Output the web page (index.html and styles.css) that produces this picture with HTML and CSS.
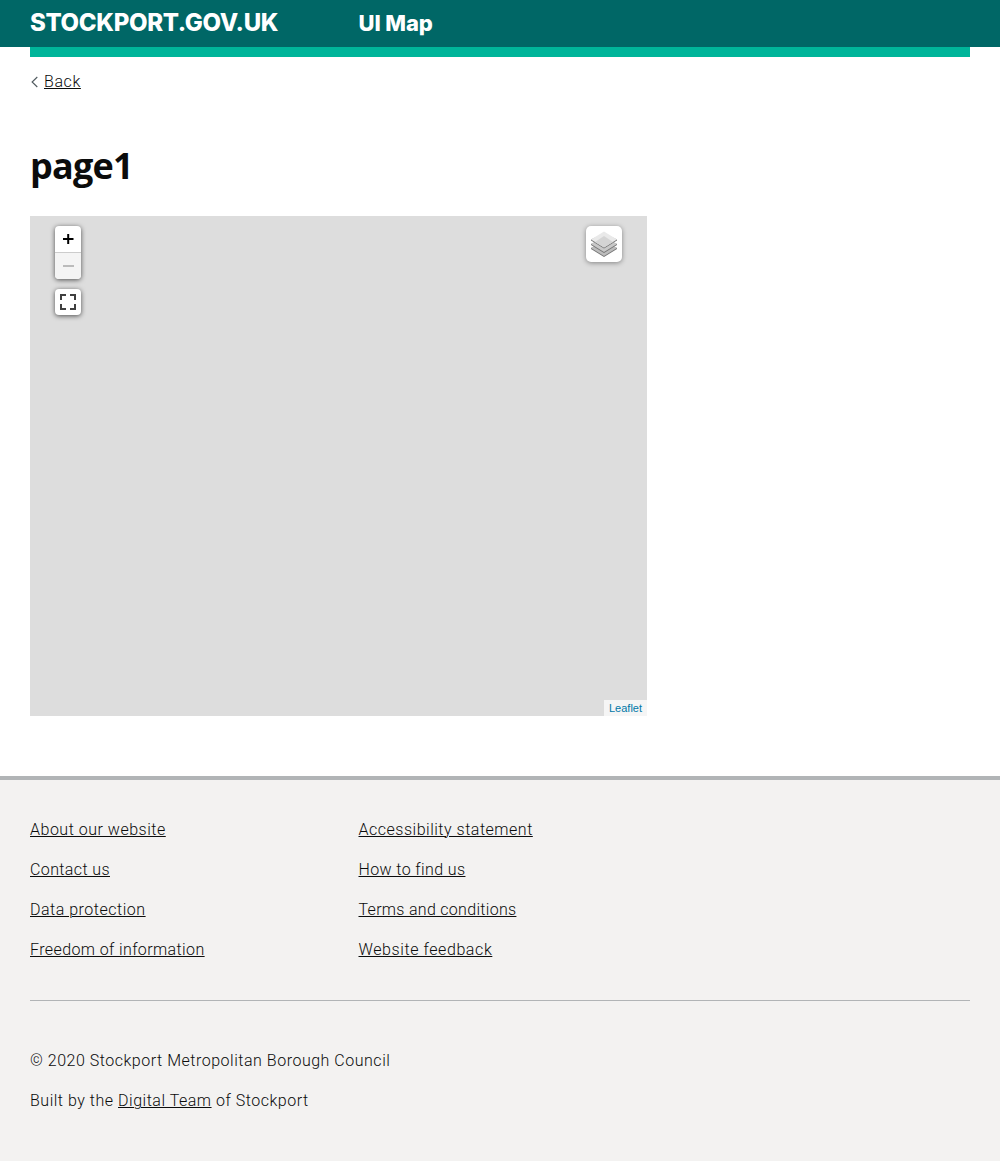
FILE: index.html
```html
<!DOCTYPE html>
<html lang="en">
<head>
<meta charset="utf-8">
<title>page1 - UI Map</title>
<link rel="stylesheet" href="styles.css">
</head>
<body>
<header class="header">
  <div class="header-row">
    <span class="brand">STOCKPORT.GOV.UK</span>
    <span class="service">UI Map</span>
  </div>
</header>
<div class="container">
  <div class="header-bar"></div>
  <div class="back">
    <svg class="chevron" width="8" height="12" viewBox="0 0 8 12"><path d="M7.3 1 2.1 6l5.2 5" fill="none" stroke="#505a5f" stroke-width="1.1"/></svg>
    <a class="link back-link" href="#">Back</a>
  </div>
  <main>
    <h1 class="title">page1</h1>
    <div class="map">
      <div class="controls">
        <div class="control zoom">
          <a class="button" href="#" aria-label="Zoom in"><svg width="26" height="26" viewBox="0 0 26 26"><path d="M8 13h10.500M13.200 8v10" fill="none" stroke="#000" stroke-width="2"/></svg></a>
          <a class="button disabled" href="#" aria-label="Zoom out"><svg width="26" height="26" viewBox="0 0 26 26"><path d="M8 13h11" fill="none" stroke="#bbb" stroke-width="2"/></svg></a>
        </div>
        <a class="control button" href="#" aria-label="Full screen"><svg width="26" height="26" viewBox="0 0 26 26"><path d="M6 11V6h5M15 6h5v5M20 15v5h-5M11 20H6v-5" fill="none" stroke="#404040" stroke-width="2"/></svg></a>
      </div>
      <a class="control layers" href="#" aria-label="Layers">
        <svg width="26" height="26" viewBox="0 0 26 26">
          <path d="M0 17v1l13 8 13-8v-1l-13-6z" fill="#747474"/><path d="M0 17l13-8 13 8-13 8z" fill="#bcbcbc"/>
          <path d="M0 13v1l13 8 13-8v-1l-13-6z" fill="#747474"/><path d="M0 13l13-8 13 8-13 8z" fill="#c8c8c8"/>
          <path d="M0 8.500v1l13 8 13-8v-1l-13-6z" fill="#747474"/><path d="M0 8.500l13-8 13 8-13 8z" fill="#e9e9e9"/><path d="M4 11l9-6 9 6-9 5.500z" fill="#d4d4d4"/>
        </svg>
      </a>
      <div class="attribution"><a href="#">Leaflet</a></div>
    </div>
  </main>
</div>
<footer class="footer">
  <div class="container">
    <div class="footer-nav">
      <ul class="list">
        <li class="loose"><a class="link" href="#">About our website</a></li>
        <li><a class="link" href="#">Contact us</a></li>
        <li class="loose"><a class="link" href="#">Data protection</a></li>
        <li><a class="link" href="#">Freedom of information</a></li>
      </ul>
      <ul class="list">
        <li class="loose"><a class="link" href="#">Accessibility statement</a></li>
        <li><a class="link" href="#">How to find us</a></li>
        <li class="tight"><a class="link" href="#">Terms and conditions</a></li>
        <li class="looser"><a class="link" href="#">Website feedback</a></li>
      </ul>
    </div>
    <div class="meta">
      <p>© 2020 Stockport Metropolitan Borough Council</p>
      <p>Built by the <a class="link" href="#">Digital Team</a> of Stockport</p>
    </div>
  </div>
</footer>
</body>
</html>
```
FILE: styles.css
```css
* { box-sizing: border-box; }
body {
  margin: 0;
  color: #0b0c0c;
  background: #fff;
  font: 300 16px/20px Roboto, "Liberation Sans", sans-serif;
  letter-spacing: 0.39px;
}
a { color: inherit; }
svg { display: block; }
.container { margin: 0 30px; }
.header { height: 47px; background: #006766; color: #fff; }
.header-row {
  display: grid;
  grid-template-columns: 328.5px 1fr;
  padding: 7px 30px 0;
  font: 800 24px/30px Inter, sans-serif;
}
.brand { padding-top: 1px; letter-spacing: -0.35px; }
.service { font-size: 22px; line-height: 32px; letter-spacing: -0.1px; }
.header-bar { height: 10px; background: #00b59a; }
.back { display: flex; align-items: center; gap: 6px; height: 20px; margin-top: 15px; letter-spacing: 0.6px; }
.link { text-decoration: underline; text-decoration-thickness: 1px; text-underline-offset: 1px; }
.title {
  margin: 49px 0 0;
  height: 75px;
  font: 700 36px/50px "Open Sans", sans-serif;
  letter-spacing: -0.8px;
}
.map {
  display: flex;
  justify-content: space-between;
  align-items: flex-start;
  position: relative;
  width: 617px;
  height: 500px;
  padding: 10px 25px;
  background: #ddd;
}
.controls { display: flex; flex-direction: column; gap: 10px; }
.control { background: #fff; border-radius: 4px; box-shadow: 0 1px 5px rgba(0,0,0,.65); }
.zoom { overflow: hidden; }
.button { display: block; width: 26px; height: 26px; }
.zoom .button:first-child { height: 27px; border-bottom: 1px solid #ccc; }
.disabled { background: #f4f4f4; }
.layers { width: 36px; height: 36px; padding: 5px; border-radius: 5px; box-shadow: 0 1px 5px rgba(0,0,0,.4); }
.attribution {
  position: absolute;
  right: 0;
  bottom: 0;
  padding: 0 5px;
  background: rgba(255,255,255,.7);
  color: #0078a8;
  font: 400 11px/16px "Liberation Sans", sans-serif;
  letter-spacing: 0;
}
.attribution a { text-decoration: none; }
.footer { height: 385px; margin-top: 60px; padding-top: 40px; border-top: 4px solid #b1b4b6; background: #f3f2f1; }
.footer-nav { display: grid; grid-template-columns: 328.5px 1fr; height: 181px; border-bottom: 1px solid #b1b4b6; }
.list { display: grid; align-content: start; gap: 20px; margin: 0; padding: 0; list-style: none; }
.tight { letter-spacing: 0.3px; }
.loose { letter-spacing: 0.51px; }
.looser { letter-spacing: 0.59px; }
.meta { padding-top: 50px; letter-spacing: 0.52px; }
.meta p { margin: 0 0 20px; }
```
